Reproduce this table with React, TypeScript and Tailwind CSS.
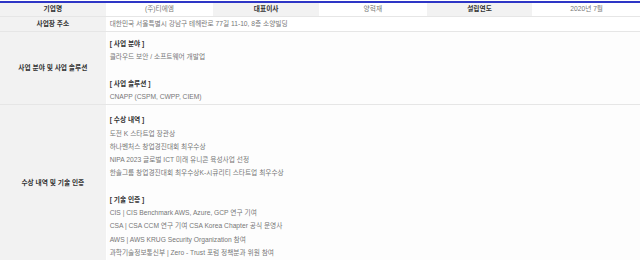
const font = { fontFamily: '"Liberation Sans", "Noto Sans CJK KR", sans-serif' };

const bizLines = ['[ 사업 분야 ]', '클라우드 보안 / 소프트웨어 개발업', '', '[ 사업 솔루션 ]', 'CNAPP (CSPM, CWPP, CIEM)'];

const awardLines = [
  '[ 수상 내역 ]',
  '도전 K 스타트업 장관상',
  '하나벤처스 창업경진대회 최우수상',
  'NIPA 2023 글로벌 ICT 미래 유니콘 육성사업 선정',
  '한솔그룹 창업경진대회 최우수상K-시큐리티 스타트업 최우수상',
  '',
  '[ 기술 인증 ]',
  'CIS | CIS Benchmark AWS, Azure, GCP 연구 기여',
  'CSA | CSA CCM 연구 기여 CSA Korea Chapter 공식 운영사',
  'AWS | AWS KRUG Security Organization 참여',
  '과학기술정보통신부 | Zero - Trust 포럼 정책분과 위원 참여',
];

function Label({ children, className = '' }: { children: React.ReactNode; className?: string }) {
  return (
    <div className={`flex items-center justify-center bg-[#f2f2f2] text-[#333] font-bold border-r border-white ${className}`}>
      {children}
    </div>
  );
}

function Lines({ lines, top }: { lines: string[]; top: string }) {
  return (
    <div className={`col-span-5 bg-[#fdfdfd] pl-[3px] pb-px ${top}`}>
      {lines.map((l, i) =>
        l.startsWith('[') ? (
          <p key={i} className="h-[13.25px] leading-[13.25px] text-[#333] font-bold">{l}</p>
        ) : (
          <p key={i} className="h-[13.25px] leading-[13.25px] text-[#777]">{l}</p>
        )
      )}
    </div>
  );
}

export default function App() {
  return (
    <div className="w-[640px] h-[260px] overflow-hidden bg-white text-[6.7px]" style={font}>
      <div className="h-[2px] mt-px bg-[#2e36c6]" />
      {/* top row */}
      <div className="grid grid-cols-6 h-[14px] border-b border-[#e6e6e6]">
        <Label>기업명</Label>
        <div className="flex items-center justify-center text-[#777] border-r border-white">(주)티에엠</div>
        <Label>대표이사</Label>
        <div className="flex items-center justify-center text-[#777] border-r border-white">양혁재</div>
        <Label>설립연도</Label>
        <div className="flex items-center justify-center text-[#777]">2020년 7월</div>
      </div>
      <div className="grid grid-cols-6 h-[15px] border-b border-[#e6e6e6]">
        <Label>사업장 주소</Label>
        <div className="col-span-5 flex items-center pl-[3px] text-[#777]">
          대한민국 서울특별시 강남구 테헤란로 77길 11-10, 8층 소양빌딩
        </div>
      </div>
      <div className="grid grid-cols-6 border-b border-[#e6e6e6]">
        <Label>사업 분야 및 사업 솔루션</Label>
        <Lines lines={bizLines} top="pt-[5px]" />
      </div>
      <div className="grid grid-cols-6">
        <Label>수상 내역 및 기술 인증</Label>
        <Lines lines={awardLines} top="pt-[8px]" />
      </div>
    </div>
  );
}
